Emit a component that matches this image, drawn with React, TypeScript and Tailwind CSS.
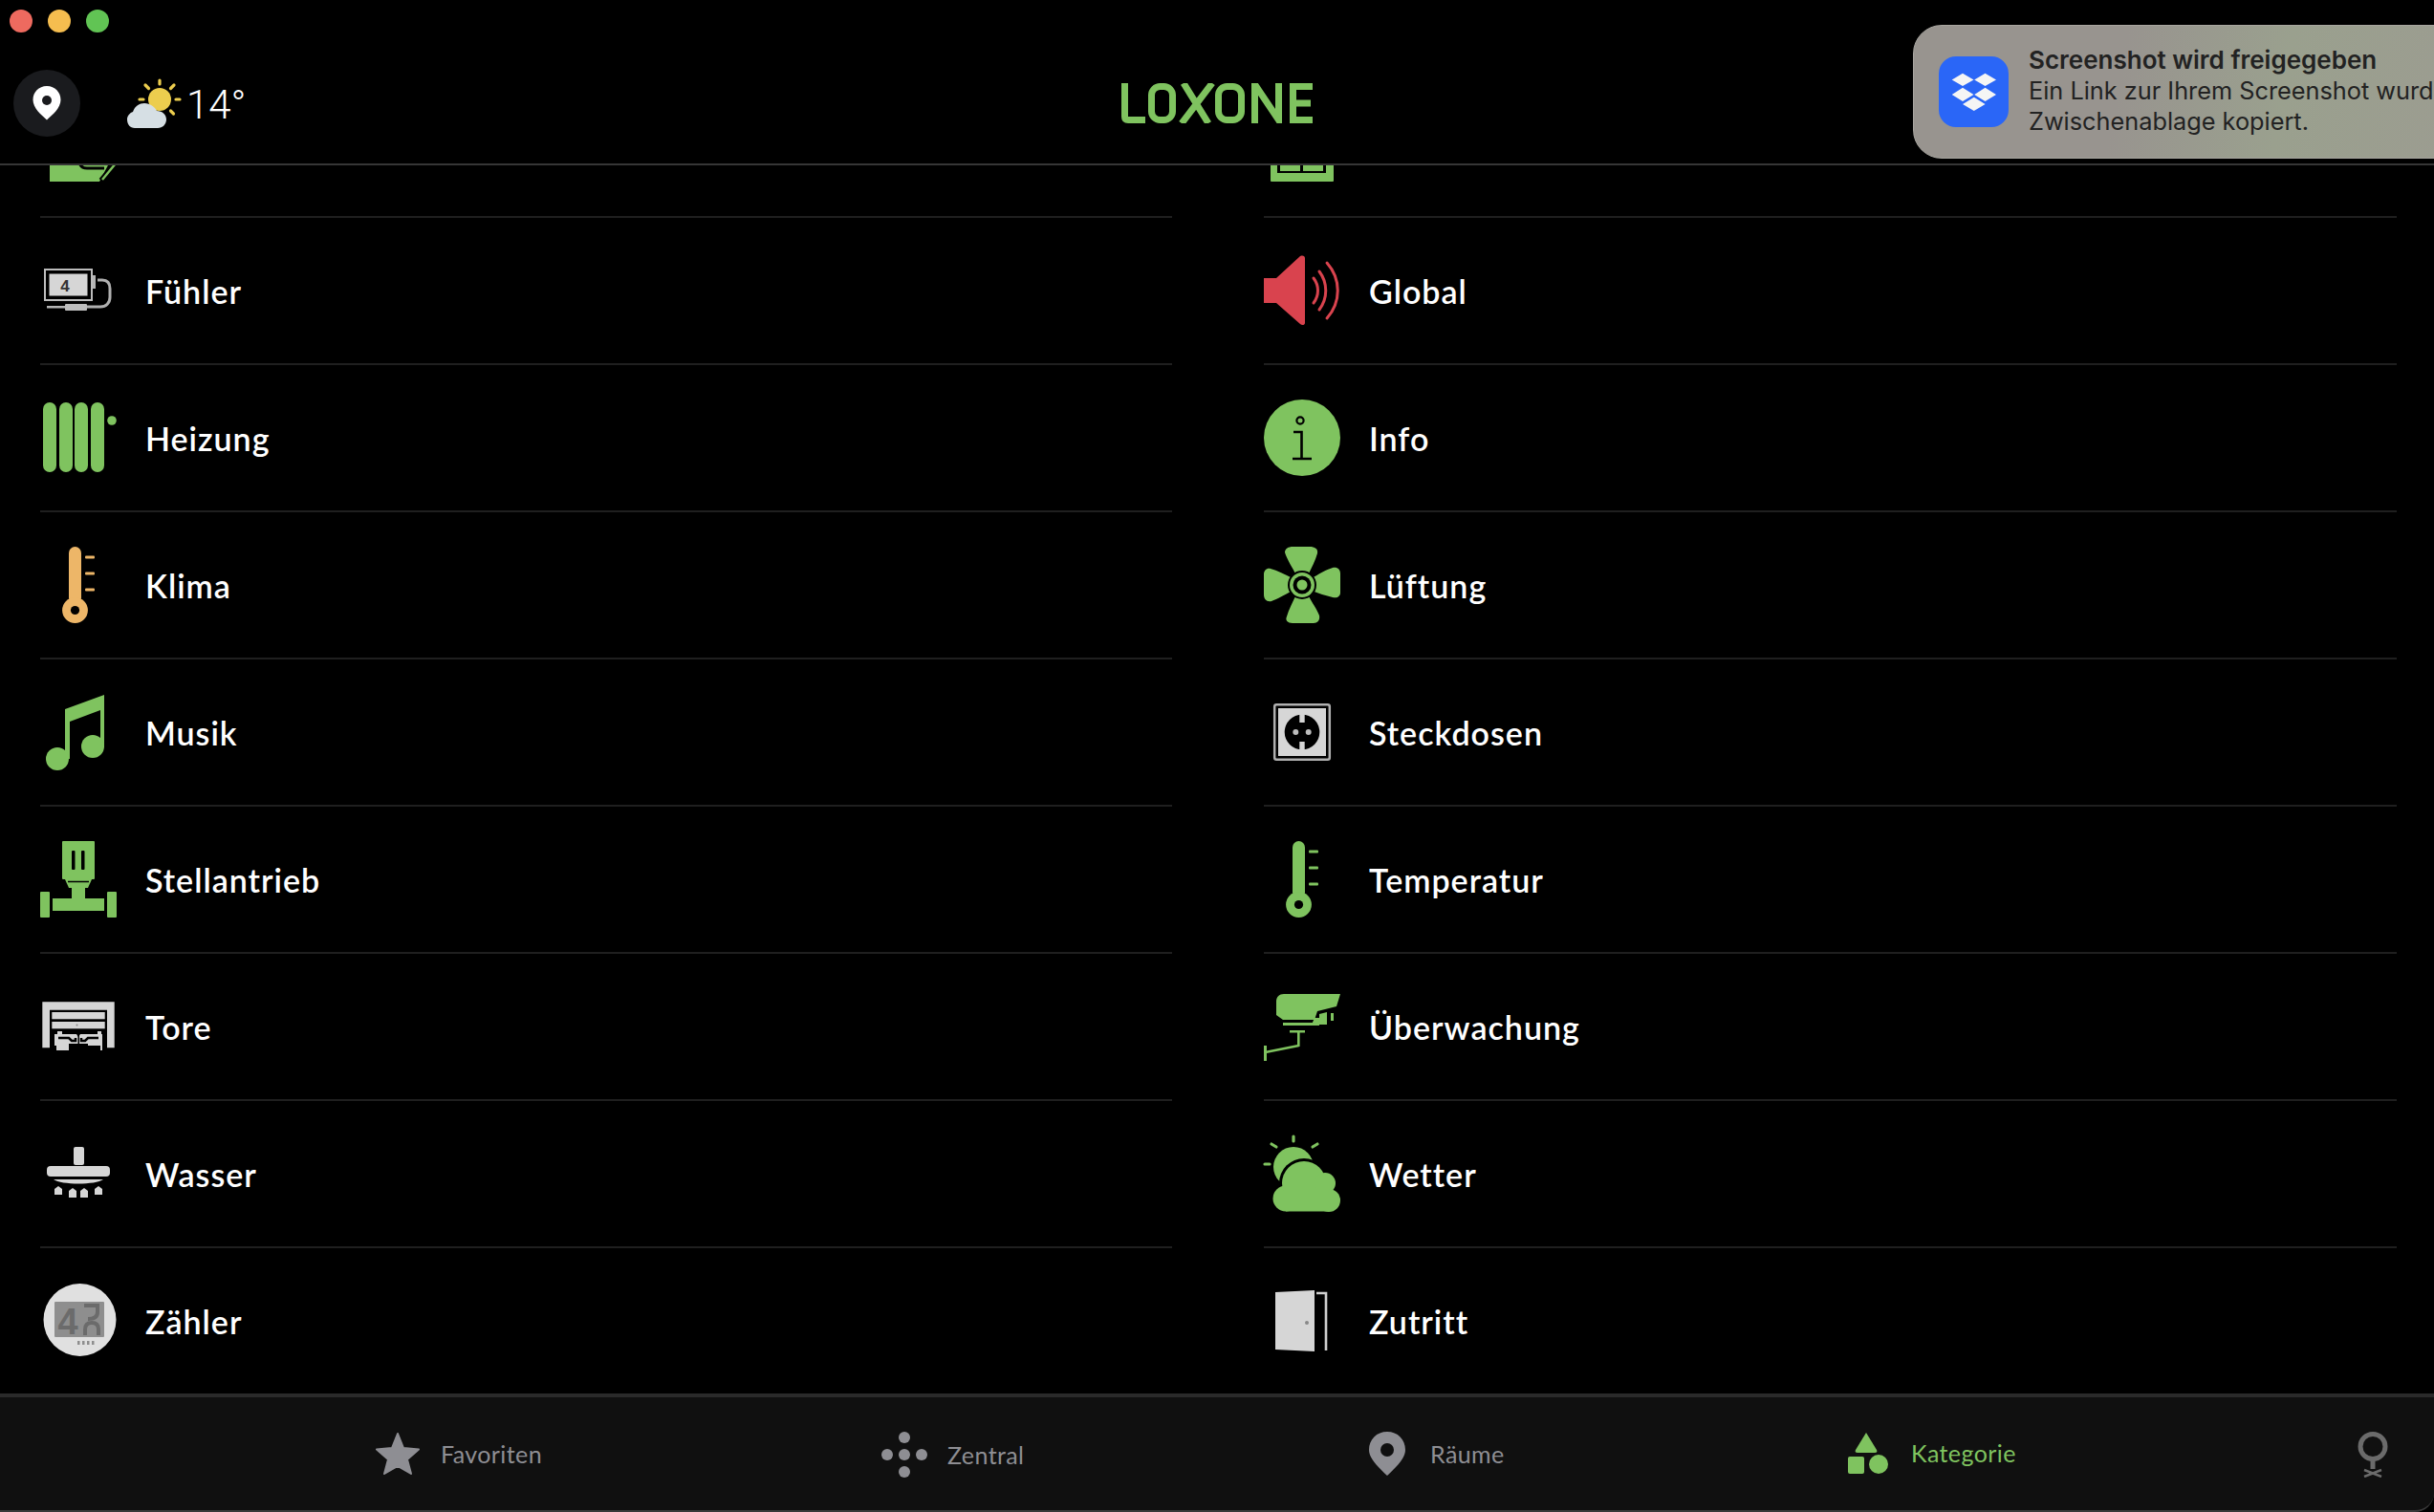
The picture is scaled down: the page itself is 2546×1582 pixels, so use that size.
import React from "react";

const G = "#7fc35f";
const W = "#d6d6d6";

function Box({ children }: { children: React.ReactNode }) {
  return (
    <svg width="80" height="80" viewBox="0 0 80 80" className="shrink-0 overflow-visible">
      {children}
    </svg>
  );
}

const Cable = () => (
  <Box>
    <path d="M10 61H72L62 80H10Z" fill={G} />
    <path d="M41 60c1 4 4 6 8 6h18" fill={G} stroke="#000" strokeWidth="3" />
    <path d="M64 79 79 61" stroke="#000" strokeWidth="6" />
    <path d="M65 78 79 61" stroke={G} strokeWidth="2.4" />
  </Box>
);
const Fenster = () => (
  <Box>
    <rect x="7" y="40" width="66" height="40" rx="1" fill={G} />
    <rect x="14" y="40" width="51" height="31" fill="#000" />
    <rect x="17" y="40" width="21" height="29" fill={G} />
    <rect x="41" y="40" width="21" height="29" fill={G} />
  </Box>
);
const Fuehler = () => (
  <Box>
    <rect x="5" y="18" width="49" height="32" fill="none" stroke="#bcbcbc" strokeWidth="2" />
    <rect x="9" y="22" width="41" height="24" fill={W} stroke="#000" strokeWidth="1" />
    <text x="26" y="41" textAnchor="middle" fontSize="17" fontWeight="700" fill="#333" fontFamily="Liberation Sans, sans-serif">4</text>
    <rect x="55" y="24" width="3" height="14" fill="#b5b5b5" />
    <path d="M60 29h5c5 0 8 3 8 9v9c0 6-4 10-10 10H45" fill="none" stroke="#b0b0b0" strokeWidth="3" />
    <rect x="7" y="56" width="20" height="2.5" fill="#b5b5b5" />
    <rect x="26" y="54" width="23" height="7" rx="1" fill="#bdbdbd" />
  </Box>
);
const Heizung = () => (
  <Box>
    {[3, 20, 36, 53].map((x) => (
      <rect key={x} x={x} y="3" width="14" height="73" rx="7" fill={G} />
    ))}
    <circle cx="75" cy="22" r="4.8" fill={G} />
  </Box>
);
const Thermo = ({ c }: { c: string }) => (
  <Box>
    <rect x="30" y="0" width="13" height="60" rx="6.5" fill={c} />
    <circle cx="36.5" cy="66.5" r="13.4" fill={c} />
    <circle cx="36.5" cy="66.5" r="4.6" fill="#000" />
    {[11, 28, 45].map((y) => (
      <rect key={y} x="47" y={y - 1.5} width="10" height="3" rx="1" fill={c} />
    ))}
  </Box>
);
const Musik = () => (
  <Box>
    <path d="M26 16 67 1V56H63V17L31 29V68H26Z" fill={G} />
    <circle cx="18" cy="68" r="12" fill={G} />
    <circle cx="55" cy="55" r="12" fill={G} />
  </Box>
);
const Stell = () => (
  <Box>
    <rect x="23" y="0" width="34" height="40" rx="1" fill={G} />
    <rect x="33" y="10" width="3.5" height="20" rx="1" fill="#000" />
    <rect x="43" y="10" width="3.5" height="20" rx="1" fill="#000" />
    <path d="M26 40h28l-4 9H30Z" fill={G} />
    <path d="M29 42.5h22" stroke="#000" strokeWidth="1.5" />
    <rect x="33" y="48" width="14" height="14" fill={G} />
    <rect x="13" y="60" width="54" height="13" fill={G} />
    <rect x="0" y="53" width="10" height="27" rx="1" fill={G} />
    <rect x="70" y="53" width="10" height="27" rx="1" fill={G} />
  </Box>
);
const Tore = () => (
  <Box>
    <path d="M2.300 14.300H77.700V62.300H70V22.700H10V62.300H2.300Z" fill={W} />
    <rect x="12.300" y="25" width="55.400" height="7.300" fill={W} />
    <rect x="12.300" y="35" width="55.400" height="7.300" fill={W} />
    <circle cx="38.500" cy="38.500" r="1" fill="#8a8a8a" />
    <path d="M15 48H18V45H23V48H38L40 51 42 48H60V45H64V48H65V60H50V65H63V60H65V65H50V60H30V65H17V60H15Z" fill={W} />
    <path d="M19 52H30L33 55H37V52M43 52V55H47L50 52H61" fill="none" stroke="#000" strokeWidth="2.500" />
    <rect x="30" y="58" width="20" height="7" fill="#000" />
    <rect x="39.500" y="48" width="1.500" height="10" fill="#000" />
  </Box>
);
const Wasser = () => (
  <Box>
    <rect x="35" y="12" width="11" height="19" rx="2" fill={W} />
    <rect x="7" y="32" width="66" height="11" rx="4" fill={W} />
    <path d="M14 46H66C58 52 22 52 14 46Z" fill={W} />
    <path d="M15 56l4-3 4 3v6h-8Z M30 58l4-3 4 3v7h-8Z M42 58l4-3 4 3v7h-8Z M57 56l4-3 4 3v6h-8Z" fill={W} />
  </Box>
);
const Zaehler = () => (
  <Box>
    <circle cx="41.5" cy="39" r="38" fill="#e0e0e0" />
    <rect x="15" y="20" width="52" height="37" rx="1" fill="#8e8e8e" />
    <text x="29" y="54" textAnchor="middle" fontSize="38" fontWeight="700" fill="#6b6b6b" fontFamily="Liberation Sans, sans-serif">4</text>
    <path d="M46 24h14v7c0 5-4 7-10 7" fill="none" stroke="#6b6b6b" strokeWidth="4" />
    <path d="M47 55v-6c0-5 3-7 7-7s7 2 7 7v6" fill="none" stroke="#6b6b6b" strokeWidth="4" />
    {[39, 44, 49, 54].map((x) => (
      <rect key={x} x={x} y="61" width="2.5" height="4" fill="#8e8e8e" />
    ))}
  </Box>
);
const Global = () => (
  <Box>
    <path d="M0 27H13L38 4c3-1 5 0 5 2V74c0 2-3 3-5 1L13 53H0Z" fill="#d9434e" />
    <g fill="none" stroke="#d9434e" strokeWidth="3" strokeLinecap="round">
      <path d="M52 27c6 8 6 18 0 26" />
      <path d="M58 20c9 12 9 28 0 40" />
      <path d="M66 11c15 17 15 41 0 58" />
    </g>
  </Box>
);
const Info = () => (
  <Box>
    <circle cx="40" cy="40" r="40" fill={G} />
    <circle cx="38" cy="22" r="3.6" fill={G} stroke="#000" strokeWidth="2.2" />
    <path d="M31 34h8.5v27M30 62h20" fill="none" stroke="#000" strokeWidth="2.6" />
  </Box>
);
const Lueftung = () => (
  <Box>
    <g fill={G}>
      <path d="M22 6C22 2 26 0 30 0H48C53 0 57 2 56 7C54 14 50 22 46 30H34C30 22 24 13 22 6Z" />
      <path d="M34 50H46C50 58 56 66 58 72C59 77 56 80 52 80H30C25 80 22 77 24 73C26 66 30 58 34 50Z" />
      <path d="M7 23C14 25 22 29 30 33V46C22 50 14 55 8 57C3 58 0 55 0 50V29C0 25 3 22 7 23Z" />
      <path d="M72 22C77 21 80 24 80 28V48C80 52 77 54 72 53C65 51 57 49 50 46V33C57 29 65 24 72 22Z" />
    </g>
    <circle cx="40" cy="40" r="15" fill="#000" />
    <circle cx="40" cy="40" r="13" fill={G} />
    <circle cx="40" cy="40" r="9.500" fill="#000" />
    <circle cx="40" cy="40" r="5.500" fill={G} />
  </Box>
);
const Steck = () => (
  <Box>
    <rect x="11.200" y="11.200" width="57.600" height="57.600" rx="2" fill="#000" stroke="#b0b0b0" strokeWidth="2.500" />
    <rect x="15" y="15" width="50" height="50" fill={W} />
    <circle cx="40" cy="40" r="18.300" fill="#000" />
    <rect x="37.300" y="20" width="5.400" height="10" fill={W} />
    <rect x="37.300" y="50" width="5.400" height="10" fill={W} />
    <circle cx="33.300" cy="40" r="3" fill="#bdbdbd" />
    <circle cx="46.700" cy="40" r="3" fill="#bdbdbd" />
  </Box>
);
const Ueber = () => (
  <Box>
    <path d="M13 14c0-5 3-8 8-8H80L76 19 56 24 53 33H20L13 28Z" fill={G} />
    <path d="M58 27 66 25V38H50L53 31H58Z" fill={G} />
    <rect x="70" y="26" width="3" height="8" fill={G} />
    <rect x="20" y="36" width="38" height="3" fill={G} />
    <rect x="27" y="44" width="16" height="2.5" fill={G} />
    <rect x="35" y="45" width="2.6" height="16" fill={G} />
    <path d="M36.5 60 1.500 67" stroke={G} strokeWidth="2.6" />
    <rect x="0" y="60" width="3" height="16" fill={G} />
  </Box>
);
const CloudShape = ({ fill, grow }: { fill: string; grow: number }) => (
  <g fill={fill}>
    <circle cx="23" cy="66" r={13.5 + grow} />
    <circle cx="42" cy="50" r={23 + grow} />
    <circle cx="64" cy="50" r={11 + grow} />
    <circle cx="68" cy="68" r={12 + grow} />
    <rect x="23" y={55 - grow} width="45" height={25 + 2 * grow - 0.5} />
  </g>
);
const Wetter = () => (
  <Box>
    <g stroke={G} strokeWidth="3.2" strokeLinecap="round">
      <path d="M31 1v5M8 9l5 3M56 9l-5 3M1 30h5" />
    </g>
    <circle cx="31" cy="33" r="21" fill={G} />
    <CloudShape fill="#000" grow={3} />
    <CloudShape fill={G} grow={0} />
  </Box>
);
const Zutritt = () => (
  <Box>
    <path d="M12 10 53 8V72L12 70Z" fill={W} />
    <circle cx="45" cy="42" r="2" fill="#888" />
    <path d="M55 11H65V71" fill="none" stroke="#cfcfcf" strokeWidth="2.6" />
  </Box>
);

const left: [React.ReactNode, string][] = [
  [<Cable />, ""],
  [<Fuehler />, "Fühler"],
  [<Heizung />, "Heizung"],
  [<Thermo c="#edb668" />, "Klima"],
  [<Musik />, "Musik"],
  [<Stell />, "Stellantrieb"],
  [<Tore />, "Tore"],
  [<Wasser />, "Wasser"],
  [<Zaehler />, "Zähler"],
];
const right: [React.ReactNode, string][] = [
  [<Fenster />, ""],
  [<Global />, "Global"],
  [<Info />, "Info"],
  [<Lueftung />, "Lüftung"],
  [<Steck />, "Steckdosen"],
  [<Thermo c={G} />, "Temperatur"],
  [<Ueber />, "Überwachung"],
  [<Wetter />, "Wetter"],
  [<Zutritt />, "Zutritt"],
];

function Column({ rows }: { rows: [React.ReactNode, string][] }) {
  return (
    <div className="flex flex-col">
      {rows.map(([icon, label], i) => (
        <div key={i} className="flex h-[154px] items-center gap-[30px] border-b-2 border-[#1f1f1f]">
          {icon}
          <span className="text-[34px] font-semibold tracking-[1px] text-white">{label}</span>
        </div>
      ))}
    </div>
  );
}

function Logo() {
  return (
    <svg width="200" height="42" viewBox="0 0 200 42" role="img" aria-label="Loxone" fill="none" stroke={G} strokeWidth="7">
      <path d="M3.500 0V35Q3.500 38.500 7 38.500H25" />
      <rect x="31.500" y="3.500" width="22" height="35" rx="9" />
      <path d="M65 0 91 42M95 0 63 42" />
      <rect x="101.500" y="3.500" width="24" height="35" rx="9" />
      <path d="M139.500 42V3.500H141L164.500 38.500V0" />
      <path d="M200 3.500H179.500V38.500H200M179.500 21H198" />
    </svg>
  );
}

function Tab({ className, icon, label, active }: { className: string; icon: React.ReactNode; label: string; active?: boolean }) {
  return (
    <div className={`flex items-center ${className}`}>
      {icon}
      <span className={active ? "pt-[2px] text-[25px] tracking-[0.4px] text-[#7fc35f]" : "pt-[2px] text-[25px] tracking-[0.4px] text-[#8e8e93]"}>{label}</span>
    </div>
  );
}

export default function App() {
  return (
    <div className="relative flex h-[1582px] w-[2546px] flex-col overflow-hidden bg-black font-['Lato','Noto_Sans',sans-serif]">
      <header className="relative z-10 h-[173px] shrink-0 border-b-2 border-[#363636] bg-black">
        <div className="flex gap-4 pl-[10px] pt-[10px]">
          <div className="h-6 w-6 rounded-full bg-[#ee6a5f]" />
          <div className="h-6 w-6 rounded-full bg-[#f5bd4f]" />
          <div className="h-6 w-6 rounded-full bg-[#61c454]" />
        </div>
        <div className="mt-[39px] grid grid-cols-[1fr_200px_1fr] items-center">
          <div className="flex items-center pl-[14px]">
            <div className="flex h-[70px] w-[70px] items-center justify-center rounded-full bg-[#1a1b1e]">
              <svg width="30" height="36" viewBox="0 0 30 36">
                <path d="M15 0C6.500 0 0.500 6.500 0.500 14.500 0.500 23 9 30 15 35.500 21 30 29.500 23 29.500 14.500 29.500 6.500 23.500 0 15 0Z" fill="#fff" />
                <circle cx="15" cy="15" r="5" fill="#1a1b1e" />
              </svg>
            </div>
            <svg width="57" height="52" viewBox="133 81 57 52" className="ml-[49px]">
              <g stroke="#eccd4e" strokeWidth="3.200" strokeLinecap="round">
                <path d="M167 83v4M152 88l3.500 3.500M182 88l-3.500 3.500M184 103h4M146 103h4M178.500 115l3 3" />
              </g>
              <circle cx="167" cy="103" r="12" fill="#eccd4e" />
              <path d="M141 133c-5 0-8-4-8-9 0-4 3-7 6-8 2-6 7-9 12-9 6 0 11 4 13 8 6 0 10 4 10 9 0 5-4 9-9 9Z" fill="#d6dfe4" />
            </svg>
            <span className="ml-[5px] pt-[3px] font-['Roboto',sans-serif] text-[42px] font-light leading-none text-white">14°</span>
          </div>
          <Logo />
          <div />
        </div>
      </header>

      <div className="absolute left-[2001px] top-[26px] z-20 flex h-[140px] w-[620px] items-center gap-[21px] rounded-[30px] border border-[#a8a6a0] bg-[linear-gradient(100deg,#98948f_0%,#98948f_35%,#9aa08e_62%,#9c9b91_100%)] pl-[26px] font-['Inter',sans-serif] text-[#222]">
        <div className="flex h-[74px] w-[73px] shrink-0 items-center justify-center rounded-[18px] bg-[#2a66f7]">
          <svg width="73" height="74" viewBox="0 0 73 74" fill="#f5f5f5">
            <path d="M13.700 24.500 25 17.700 36.500 24.500 25 31ZM37.200 24.500 48.500 17.700 60 24.500 48.500 31ZM13.700 40 25 32.700 36.500 40 25 47ZM37.200 40 48.500 32.700 60 40 48.500 47ZM25 50 36.800 42.700 48.600 50 36.800 57Z" />
          </svg>
        </div>
        <div className="-mt-[2px] whitespace-nowrap text-[25.3px] leading-[32px]">
          <div className="text-[26px] font-semibold">Screenshot wird freigegeben</div>
          <div>Ein Link zur Ihrem Screenshot wurde in die</div>
          <div>Zwischenablage kopiert.</div>
        </div>
      </div>

      <main className="min-h-0 flex-1 overflow-hidden">
        <div className="-mt-[99px] grid grid-cols-[1184px_1185px] gap-x-[96px] pl-[42px]">
          <Column rows={left} />
          <Column rows={right} />
        </div>
      </main>

      <nav className="relative z-10 flex h-[124px] shrink-0 items-start rounded-br-[20px] border-t-4 border-b-2 border-t-[#2a2a2a] border-b-[#3a3a3a] bg-[#101010] pl-[392px] pt-[36px]">
        <Tab
          className="w-[530px] gap-[21px]"
          label="Favoriten"
          icon={
            <svg width="48" height="46" viewBox="0 0 48 46">
              <path d="M24 2 30 17 46 18.500 34 29 38 44 24 36 10 44 14 29 2 18.500 18 17Z" fill="#8e8e93" stroke="#8e8e93" strokeWidth="2" strokeLinejoin="round" />
            </svg>
          }
        />
        <Tab
          className="w-[510px] gap-[21px]"
          label="Zentral"
          icon={
            <svg width="48" height="48" viewBox="0 0 48 48" fill="#8e8e93">
              <circle cx="24" cy="6" r="6" />
              <circle cx="24" cy="24" r="6" />
              <circle cx="24" cy="42" r="6" />
              <circle cx="6" cy="24" r="6" />
              <circle cx="42" cy="24" r="6" />
            </svg>
          }
        />
        <Tab
          className="w-[501px] gap-[26px]"
          label="Räume"
          icon={
            <svg width="38" height="46" viewBox="0 0 38 46">
              <path d="M19 0C8 0 0 8 0 19 0 29 12 39 19 46 26 39 38 29 38 19 38 8 30 0 19 0Z" fill="#8e8e93" />
              <circle cx="19" cy="19" r="7" fill="#101010" />
            </svg>
          }
        />
        <Tab
          className="w-[533px] gap-[24px]"
          active
          label="Kategorie"
          icon={
            <svg width="42" height="44" viewBox="0 0 42 44" fill="#7fc35f">
              <path d="M19 1 30 19c1 2 0 3-2 3H10c-2 0-3-1-2-3Z" />
              <rect x="0" y="26" width="17" height="18" rx="2" />
              <circle cx="32" cy="34" r="10" />
            </svg>
          }
        />
        <svg width="32" height="48" viewBox="0 0 32 48" fill="none" stroke="#6b6b6b">
          <circle cx="16" cy="15.500" r="13" strokeWidth="5" />
          <path d="M16 29V39" strokeWidth="5" />
          <path d="M7 40 25 47M25 40 7 47" strokeWidth="2.500" />
        </svg>
      </nav>
    </div>
  );
}
